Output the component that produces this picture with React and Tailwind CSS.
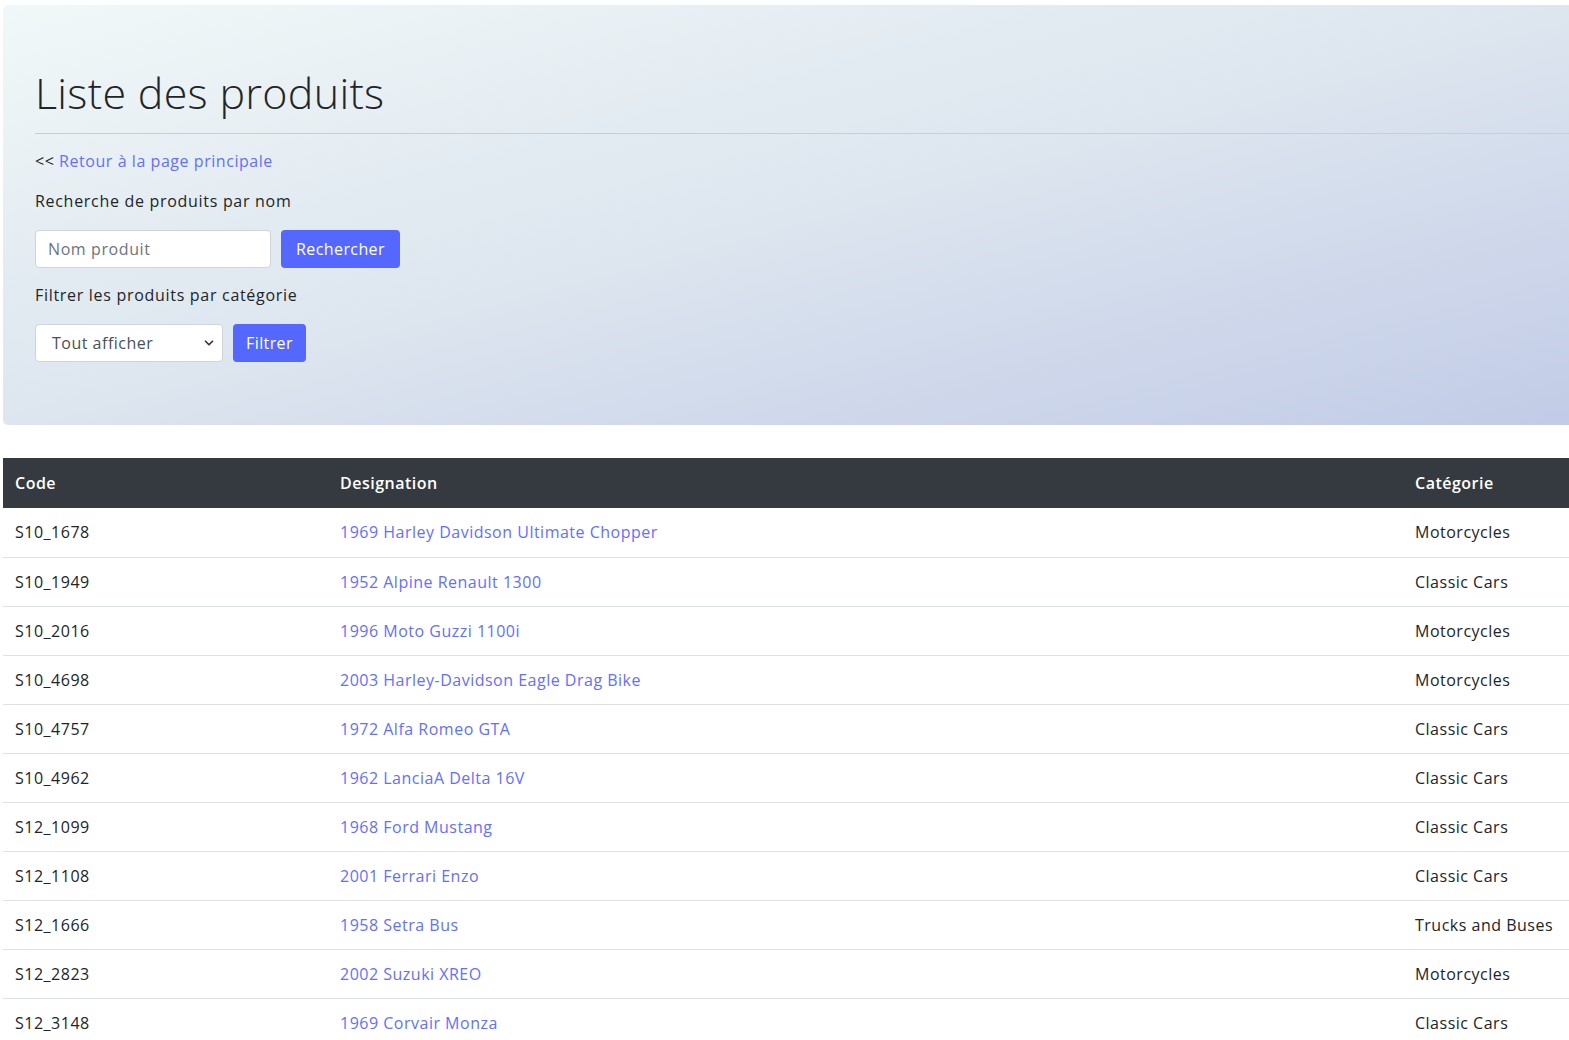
import { ChevronDown } from 'lucide-react'

const products = [
  { code: 'S10_1678', name: '1969 Harley Davidson Ultimate Chopper', cat: 'Motorcycles' },
  { code: 'S10_1949', name: '1952 Alpine Renault 1300', cat: 'Classic Cars' },
  { code: 'S10_2016', name: '1996 Moto Guzzi 1100i', cat: 'Motorcycles' },
  { code: 'S10_4698', name: '2003 Harley-Davidson Eagle Drag Bike', cat: 'Motorcycles' },
  { code: 'S10_4757', name: '1972 Alfa Romeo GTA', cat: 'Classic Cars' },
  { code: 'S10_4962', name: '1962 LanciaA Delta 16V', cat: 'Classic Cars' },
  { code: 'S12_1099', name: '1968 Ford Mustang', cat: 'Classic Cars' },
  { code: 'S12_1108', name: '2001 Ferrari Enzo', cat: 'Classic Cars' },
  { code: 'S12_1666', name: '1958 Setra Bus', cat: 'Trucks and Buses' },
  { code: 'S12_2823', name: '2002 Suzuki XREO', cat: 'Motorcycles' },
  { code: 'S12_3148', name: '1969 Corvair Monza', cat: 'Classic Cars' },
  { code: 'S12_3380', name: '1968 Dodge Charger', cat: 'Classic Cars' },
]

const ProductList = () => {
  return (
    <div className="h-[1040px] w-full overflow-hidden bg-white font-['Open_Sans',sans-serif] text-[#212529]">
      <div className="ml-[3px] mt-[5px] w-[1600px]">
        <div className="h-[420px] rounded-l-[5px] bg-gradient-to-br from-[#f0f8f8] via-[#dde5ef] to-[#c1cbe6] pl-8 pt-[56px]">
          <h1 className="h-[64px] text-[43px] font-light leading-[64px] tracking-[0.3px] text-[#212529]">
            Liste des produits
          </h1>
          <hr className="mt-[8px] border-t border-[#c6ced8]" />
          <p className="mt-[15px] h-[24px] text-[16px] leading-[24px] tracking-[0.55px]">
            &lt;&lt; <a href="#" className="text-[#6370ff]">Retour à la page principale</a>
          </p>
          <p className="mt-[16px] h-[24px] text-[16px] leading-[24px] tracking-[0.7px]">
            Recherche de produits par nom
          </p>
          <div className="mt-[17px] flex gap-[10px]">
            <input
              placeholder="Nom produit"
              className="h-[38px] w-[236px] rounded border border-[#ced4da] bg-white px-3 text-[16px] tracking-[0.6px] placeholder:text-[#6c757d]"
            />
            <button className="h-[38px] w-[119px] rounded bg-[#5468ff] text-[16px] tracking-[0.4px] text-white">
              Rechercher
            </button>
          </div>
          <p className="mt-[15px] h-[24px] text-[16px] leading-[24px] tracking-[0.7px]">
            Filtrer les produits par catégorie
          </p>
          <div className="mt-[17px] flex gap-[10px]">
            <div className="flex h-[38px] w-[188px] items-center justify-between rounded border border-[#ced4da] bg-white pl-4 pr-[6px] text-[16px] tracking-[0.5px] text-[#495057]">
              <span>Tout afficher</span>
              <ChevronDown className="h-[14px] w-[14px] text-[#343a40]" strokeWidth={3} />
            </div>
            <button className="h-[38px] w-[73px] rounded bg-[#5468ff] text-[16px] tracking-[0.4px] text-white">
              Filtrer
            </button>
          </div>
        </div>

        <table className="mt-[33px] w-[1600px] border-collapse text-[16px] tracking-[0.5px]">
          <thead>
            <tr className="h-[50px] bg-[#343a40] text-left text-white">
              <th className="w-[325px] px-3 font-semibold">Code</th>
              <th className="w-[1075px] px-3 font-semibold">Designation</th>
              <th className="px-3 font-semibold">Catégorie</th>
            </tr>
          </thead>
          <tbody>
            {products.map((p) => (
              <tr key={p.code} className="h-[49px] border-b border-[#dee2e6]">
                <td className="px-3">{p.code}</td>
                <td className="px-3">
                  <a href="#" className="text-[#6370ff]">{p.name}</a>
                </td>
                <td className="px-3">{p.cat}</td>
              </tr>
            ))}
          </tbody>
        </table>
      </div>
    </div>
  )
}

export default ProductList
